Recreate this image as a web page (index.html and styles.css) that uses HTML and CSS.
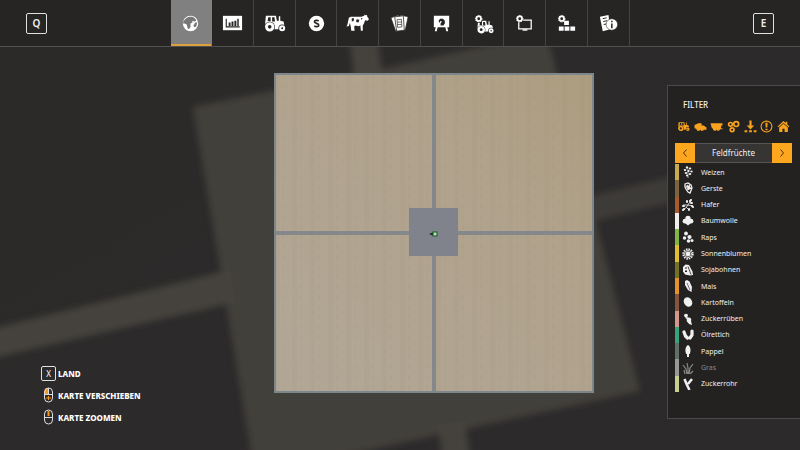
FILE: index.html
```html
<!DOCTYPE html>
<html lang="de">
<head>
    <meta charset="UTF-8">
    <meta name="viewport" content="width=device-width, initial-scale=1.0">
    <title>Karte</title>
    <link rel="stylesheet" href="styles.css">
</head>
<body>
    <svg class="backdrop" viewBox="0 0 800 450" preserveAspectRatio="xMidYMid slice" aria-hidden="true">
        <defs>
            <linearGradient id="ground" x1="0" y1="0" x2="1" y2="1">
                <stop offset="0" stop-color="#2b2a29"/>
                <stop offset="1" stop-color="#2d2a2b"/>
            </linearGradient>
            <filter id="soft" x="-10%" y="-10%" width="120%" height="120%"><feGaussianBlur stdDeviation="3"/></filter>
        </defs>
        <rect width="800" height="450" fill="url(#ground)"/>
        <g filter="url(#soft)" fill="#45433d">
            <path fill="#42403a" d="M193 107 L378 70 546 32 640 391 470 428 255 475Z"/>
            <path d="M348 20h27l8 60-28 6Z"/>
            <path d="M-20 332 L230 270 236 302 -20 361Z"/>
            <path fill="#3d3b37" d="M590 196 L820 142 820 166 594 221Z"/>
            <path d="M438 425 L465 420 472 470 444 470Z"/>
        </g>
    </svg>

    <header class="topbar">
        <button class="key" type="button">Q</button>
        <nav class="tabs">
            <button class="tab active" type="button" aria-label="Karte">
                <svg viewBox="0 0 24 24"><circle cx="12" cy="12" r="8" fill="#fff"/><path fill="#777" d="M5 9l3-3 3-1 3 0 3 2 1 2-2 1-2-1 0 2-2 1 0 4-2 2-1-1-1-4-2-1-2 0zM17 11l2 0-1 4-2 1-1-2z"/></svg>
            </button>
            <button class="tab" type="button" aria-label="Preise">
                <svg viewBox="0 0 24 24"><path fill="#fff" d="M2 4h20v15H2z"/><path fill="none" stroke="#272625" stroke-width="1.200" d="M5.500 7v8.500h14"/><path fill="#272625" d="M8 11h2v3.500H8zM11 10h2v4.500h-2zM14 9h2v5.500h-2zM17 7h1.500v7.500H17z"/></svg>
            </button>
            <button class="tab" type="button" aria-label="Fahrzeuge">
                <svg viewBox="0 0 24 24"><use href="#tractor"/></svg>
            </button>
            <button class="tab" type="button" aria-label="Finanzen">
                <svg viewBox="0 0 24 24"><circle cx="12" cy="12" r="8" fill="#fff"/><path fill="none" stroke="#272625" stroke-width="1.700" d="M14.300 9.300c-1.500-1-4.500-.8-4.500.9 0 2 4.600 1.300 4.600 3.500 0 1.800-3.100 2-4.800.8"/></svg>
            </button>
            <button class="tab" type="button" aria-label="Tiere">
                <svg viewBox="0 0 24 24"><path fill="#fff" d="M3 6L5 5l11 0 3-1 .5-1.500 1 1 1.500-.5 0 1.500 2 3-1.500 1.500-2.500-.5-1.500 4-1 1.500v5.500h-2l-.5-5.500-2 .8-3-.8-1.500 1 .5 4.500H5.500l-.5-4.500-1-3.500-1 3L.5 15l1-2z"/><path fill="#272625" d="M6 6.500l2.500 0-.5 3-2 .5zM11 7.500l3 .5-1 3-2.500-.5zM15.500 6l1.500.5-.5 2z"/></svg>
            </button>
            <button class="tab" type="button" aria-label="Verträge">
                <svg viewBox="0 0 24 24"><path fill="#fff" stroke="#272625" stroke-width=".8" d="M3 6l8-3 4 14-7 3z"/><path fill="#fff" stroke="#272625" stroke-width=".8" d="M13 3l8 2-3 14-8-2z"/><path fill="#fff" stroke="#272625" stroke-width=".8" d="M7 5l9-1 1 15-8 1z"/><path fill="none" stroke="#272625" stroke-width=".7" d="M9.500 8l4.500-.4.500 8-4.500.4zM10 10.500h4M10 13h4"/></svg>
            </button>
            <button class="tab" type="button" aria-label="Produktion">
                <svg viewBox="0 0 24 24"><path fill="#fff" d="M4 4h16v12h-2l1 4h-2l-1-4H8l-1 4H5l1-4H4z"/><path fill="#272625" d="M9 9l1.500-2 3 0L15.500 9l0 3-1.500 2h-3v-2l1.500-2-1.500-.5-1.500 2z"/></svg>
            </button>
            <button class="tab" type="button" aria-label="Fahrzeugeinstellungen">
                <svg viewBox="0 0 24 24"><g transform="translate(4 6) scale(.8)"><use href="#tractor" width="24" height="24"/></g><circle class="hole" cx="7" cy="7" r="4.500"/><use href="#cog" width="24" height="24"/></svg>
            </button>
            <button class="tab" type="button" aria-label="Anzeige">
                <svg viewBox="0 0 24 24"><path fill="none" stroke="#fff" stroke-width="1.300" d="M6 8.500h13v9H6z"/><path fill="#fff" d="M10 18h5v1.500h-5z"/><circle cx="7" cy="7" r="4" fill="#272625"/><use href="#cog"/></svg>
            </button>
            <button class="tab" type="button" aria-label="Spieleinstellungen">
                <svg viewBox="0 0 24 24"><path fill="#fff" d="M9.500 9h5v4.500h-5zM4 15h5v4.500H4zM10 15h5v4.500h-5zM16 15h5v4.500h-5z"/><use href="#cog"/></svg>
            </button>
            <button class="tab" type="button" aria-label="Hilfe">
                <svg viewBox="0 0 24 24"><path fill="#fff" d="M3 5l9-2 2 15-8 2z"/><path fill="none" stroke="#272625" d="M6 7l4-1M6.500 10l4-1M7 13l3-.5"/><circle cx="15.500" cy="13" r="6" fill="#fff" stroke="#272625" stroke-width=".6"/><path stroke="#272625" stroke-width="1.600" d="M15.500 9v1.600M15.500 12v5"/></svg>
            </button>
        </nav>
        <button class="key" type="button">E</button>
    </header>

    <main class="screen">
        <ul class="hints">
            <li><span class="key small">X</span>LAND</li>
            <li>
                <svg viewBox="0 0 15 16"><path fill="#f39a1e" d="M7 1C4 1 3.500 3 3.500 5v2H7z"/><rect x="3.500" y="1" width="8" height="14" rx="4" fill="none" stroke="#ddd"/><path fill="none" stroke="#ddd" d="M3.500 7.500h8M7.500 1v6"/><path fill="none" stroke="#f39a1e" d="M5 11h5M7.500 9v4"/></svg>
                KARTE VERSCHIEBEN
            </li>
            <li>
                <svg viewBox="0 0 15 16"><rect x="3.500" y="1" width="8" height="14" rx="4" fill="none" stroke="#ddd"/><path fill="none" stroke="#ddd" d="M3.500 8.500h8"/><path fill="none" stroke="#f39a1e" stroke-width="2" d="M7.500 2v5"/></svg>
                KARTE ZOOMEN
            </li>
        </ul>

        <svg class="map" viewBox="0 0 320 320" role="img" aria-label="Karte">
            <defs>
                <linearGradient id="field" x1="0" y1="1" x2="1" y2="0">
                    <stop offset="0" stop-color="#b2a797"/>
                    <stop offset=".7" stop-color="#b0a28b"/>
                    <stop offset="1" stop-color="#ac9d80"/>
                </linearGradient>
                <pattern id="rows" width="18" height="10" patternUnits="userSpaceOnUse">
                    <path fill="#8d805f" opacity=".07" d="M0 0h5v10H0z"/>
                    <path fill="#8d805f" opacity=".08" d="M8 2h2v4H8z"/>
                </pattern>
            </defs>
            <rect width="320" height="320" fill="#7d868a"/>
            <rect x="2" y="2" width="316" height="316" fill="url(#field)"/>
            <rect x="2" y="2" width="316" height="316" fill="url(#rows)"/>
            <path fill="#85888a" d="M158 2h4v316h-4zM2 158h316v4H2z"/>
            <rect x="135" y="135" width="49" height="48" fill="#80838b"/>
            <path fill="#16241a" d="M155 161l5-2v4z"/>
            <rect x="159" y="159" width="4" height="4" fill="#a9e0ae" stroke="#1d5a2a"/>
        </svg>

        <aside class="panel">
            <h2>FILTER</h2>
            <div class="categories">
                <button type="button" aria-label="Traktoren"><svg viewBox="0 0 24 24"><use href="#tractor"/></svg></button>
                <button type="button" aria-label="Erntemaschinen"><svg viewBox="0 0 24 24"><path d="M1 9l7-3h6v4h4l5 4v4h-5l-1 2h-4l-1-2-2 2H6l-2-4-3-1z"/></svg></button>
                <button type="button" aria-label="Anhänger"><svg viewBox="0 0 24 24"><path d="M1 6h22v4h-2l-1 5h3v2H6l-3-3z"/><circle cx="9" cy="17" r="3"/><circle cx="15" cy="17" r="3"/></svg></button>
                <button type="button" aria-label="Geräte"><svg viewBox="0 0 24 24"><g fill="none" stroke="currentColor" stroke-width="3"><circle cx="6.500" cy="8" r="3.500"/><circle cx="17" cy="7.500" r="4.500"/><circle cx="9.500" cy="18" r="3.500"/></g></svg></button>
                <button type="button" aria-label="Abladestellen"><svg viewBox="0 0 24 24"><path d="M10 1h4v9h5L12 17.500 5 10h5zM1 19h5v3.500H1zM9.500 19h5v3.500h-5zM18 19h5v3.500h-5z"/></svg></button>
                <button type="button" aria-label="Hinweise"><svg viewBox="0 0 24 24"><circle cx="12" cy="12" r="10" fill="none" stroke="currentColor" stroke-width="2"/><path d="M10 5h4l-.5 9h-3zM10 16h4v3h-4z"/></svg></button>
                <button type="button" aria-label="Gebäude"><svg viewBox="0 0 24 24"><path d="M12 2l4 3.600V3h3v5.400L23 12l-1.500 1.500L12 5.500l-9.500 8L1 12zM4 14l8-7 8 7v8h-6v-6h-4v6H4z"/></svg></button>
            </div>

            <div class="picker">
                <button type="button" aria-label="Zurück"><svg viewBox="0 0 10 10"><path d="M6.500 1.500L3.500 5l3 3.500"/></svg></button>
                <span>Feldfrüchte</span>
                <button type="button" aria-label="Weiter"><svg viewBox="0 0 10 10"><path d="M3.500 1.500L6.500 5l-3 3.500"/></svg></button>
            </div>

            <ul class="crops">
                <li class="weizen"><svg viewBox="0 0 12 12"><path d="M6 12V3" fill="none" stroke="currentColor" stroke-width=".6"/><ellipse cx="5" cy="1.500" rx="1.200" ry="1.300"/><ellipse cx="8" cy="2.500" rx="1.300" ry="1.100"/><ellipse cx="3" cy="4" rx="1.300" ry="1.100"/><ellipse cx="6.500" cy="5" rx="1.200" ry="1.100"/><ellipse cx="9.500" cy="5.500" rx="1.200" ry="1.100"/><ellipse cx="4" cy="7" rx="1.300" ry="1.100"/><ellipse cx="8" cy="8" rx="1.300" ry="1.100"/><ellipse cx="5" cy="9.500" rx="1.100" ry="1"/></svg>Weizen</li>
                <li class="gerste"><svg viewBox="0 0 12 12"><path fill="none" stroke="currentColor" stroke-width="1.300" d="M3 2l3-1 3 2 1 3-2 5-2-1-2-3-1-2zM5 3l2 5M7 3l1 4M4 5l4-1M5 7l4-1"/></svg>Gerste</li>
                <li class="hafer"><svg viewBox="0 0 12 12"><path fill="none" stroke="currentColor" stroke-width=".8" d="M2 11l4-5 3-5M6 6H1M6 6l5 1M4 8l3 3"/><path fill="none" stroke="currentColor" stroke-width="2" stroke-linecap="round" d="M5 2l0 1M9 1l-1 1M10 4l-1 0M1 7h1M10 7l1 1M7 10l0 1M1 11l1-1"/></svg>Hafer</li>
                <li class="baumwolle"><svg viewBox="0 0 12 12"><circle cx="6" cy="3.500" r="2.700"/><circle cx="3" cy="6.200" r="2.400"/><circle cx="9" cy="6.200" r="2.400"/><path d="M3 5h6v3l-3 2.500L3 8z"/></svg>Baumwolle</li>
                <li class="raps"><svg viewBox="0 0 12 12"><circle cx="4" cy="2.500" r="1.900"/><circle cx="2.500" cy="7" r="1.700"/><circle cx="7.500" cy="6" r="2.100"/><circle cx="6.500" cy="10" r="1.800"/><circle cx="10" cy="9.500" r="1.500"/></svg>Raps</li>
                <li class="sonnenblumen"><svg viewBox="0 0 12 12"><circle cx="6" cy="6" r="2.400"/><circle cx="6" cy="6" r="3.500" fill="none" stroke="currentColor" stroke-width=".9"/><circle cx="6" cy="6" r="4.800" fill="none" stroke="currentColor" stroke-width="1.800" stroke-dasharray="1.500 1"/></svg>Sonnenblumen</li>
                <li class="sojabohnen"><svg viewBox="0 0 12 12"><path d="M1 3l2.500-2.500L7 1l3.500 6.500L11 11l-3 .5-5-1-2-3z"/><path fill="none" stroke="#232120" stroke-width=".8" d="M6 2.500l3 8"/><path fill="#232120" d="M3.500 3h1v2h-1zM3 6.500h2v1.500H3z"/></svg>Sojabohnen</li>
                <li class="mais"><svg viewBox="0 0 12 12"><path d="M3 1l2-1 2.500 1.500L10 7l-.5 5-3.500-2-3-5z"/><path fill="none" stroke="#232120" stroke-width=".6" d="M5 3l3 7"/></svg>Mais</li>
                <li class="kartoffeln"><svg viewBox="0 0 12 12"><ellipse cx="6" cy="6" rx="4" ry="5" transform="rotate(-30 6 6)"/></svg>Kartoffeln</li>
                <li class="zuckerrueben"><svg viewBox="0 0 12 12"><ellipse cx="4" cy="2.500" rx="2" ry="1.800"/><ellipse cx="7" cy="7" rx="2.300" ry="2.600"/><path d="M5 8l4 0 1 4-3-1z"/><path d="M3 3l1 3 3-1z"/></svg>Zuckerrüben</li>
                <li class="oelrettich"><svg viewBox="0 0 12 12"><path fill="none" stroke="currentColor" stroke-width="3.200" stroke-linecap="round" d="M2 3l1.500 4L5.500 9M10 2l0 4-2 3"/></svg>Ölrettich</li>
                <li class="pappel"><svg viewBox="0 0 12 12"><path d="M6 0c3 2 3 6 1.800 9H7v3H5V9h-.8C3 6 3 2 6 0z"/></svg>Pappel</li>
                <li class="gras off"><svg viewBox="0 0 12 12"><path fill="none" stroke="currentColor" stroke-width="1.200" d="M5 12L4 7 1 3M6 12V6L5 1M7 12l1-6 3-4M3 12L2 8M8 12l3-3"/></svg>Gras</li>
                <li class="zuckerrohr"><svg viewBox="0 0 12 12"><path fill="none" stroke="currentColor" stroke-width="2.500" d="M2.500 1l2 5 3 6M10 1L6 6"/></svg>Zuckerrohr</li>
            </ul>
        </aside>
    </main>

    <!-- shared icons -->
    <svg class="sprite" aria-hidden="true">
        <symbol id="tractor" viewBox="0 0 24 24">
            <path fill="currentColor" d="M3 4h10.500l1 5h2V4.500H18V9l3.500 1 1 5-3 3h-8L8 13l-6 1z"/>
            <path class="hole" d="M5.500 5.500h2.500V9.500H4.800zM9.500 5.500H12l.5 4.500h-3z"/>
            <circle class="hole" cx="7" cy="15.500" r="5.500"/>
            <circle class="hole" cx="20" cy="17" r="3.900"/>
            <circle cx="7" cy="15.500" r="3.400" fill="none" stroke="currentColor" stroke-width="3"/>
            <circle cx="20" cy="17" r="2.100" fill="none" stroke="currentColor" stroke-width="2.200"/>
        </symbol>
        <symbol id="cog" viewBox="0 0 24 24">
            <circle cx="7" cy="7" r="2.400" fill="none" stroke="currentColor" stroke-width="1.800"/>
            <circle cx="7" cy="7" r="3.400" fill="none" stroke="currentColor" stroke-width="1" stroke-dasharray="1.500 1"/>
        </symbol>
    </svg>
</body>
</html>
```
FILE: styles.css
```css
* {
    box-sizing: border-box;
}
body {
    margin: 0;
    min-height: 100vh;
    display: flex;
    flex-direction: column;
    background: #2c2a2a;
    color: #f0f0f0;
    font-family: "Noto Sans", sans-serif;
    font-size: 7px;
}
button {
    padding: 0;
    border: none;
    background: none;
    color: inherit;
    font: inherit;
    cursor: pointer;
}
ul {
    list-style: none;
    margin: 0;
    padding: 0;
}
svg {
    display: block;
    fill: currentColor;
}
.backdrop {
    position: absolute;
    inset: 0;
    width: 100%;
    height: 100%;
    z-index: -1;
}
.sprite {
    position: absolute;
    width: 0;
    height: 0;
}
.hole {
    fill: #252423;
}

/* top bar */
.topbar {
    display: flex;
    justify-content: space-between;
    align-items: center;
    height: 47px;
    padding: 0 26px;
    background: #262524;
    border-bottom: 1px solid #51504f;
}
.key {
    display: flex;
    align-items: center;
    justify-content: center;
    width: 21px;
    height: 21px;
    border: 1px solid #e0e0e0;
    border-radius: 2px;
    font-size: 10px;
    font-weight: 600;
}
.key.small {
    width: 15px;
    height: 15px;
    font-size: 8px;
    font-weight: 400;
}
.tabs {
    display: flex;
    align-self: stretch;
    width: 459px;
}
.tab {
    flex: 1;
    display: flex;
    align-items: center;
    justify-content: center;
    border-right: 1px solid #454443;
    color: #fff;
}
.tab svg {
    width: 23px;
    height: 23px;
}
.tab.active {
    background: #808080;
    border-right-color: #808080;
    box-shadow: inset 0 -2px #dca13d;
}

/* map screen */
.screen {
    flex: 1;
    display: grid;
    grid-template-columns: 4fr 320px 3fr;
    align-items: start;
}
.map {
    width: 100%;
    margin-top: 26px;
}
.hints {
    align-self: end;
    padding: 0 0 22px 41px;
    color: #fff;
    font-size: 8px;
    font-weight: 800;
}
.hints li {
    display: flex;
    align-items: center;
    gap: 2px;
    height: 22px;
}
.hints svg {
    width: 15px;
    height: 16px;
}

/* filter panel */
.panel {
    justify-self: end;
    width: 133px;
    margin-top: 38px;
    padding: 12px 8px 26px 7px;
    background: #242221;
    border: 1px solid #4b4a4a;
    border-right: none;
}
.panel h2 {
    margin: 0 0 8px 8px;
    font-size: 8px;
    font-weight: 500;
    line-height: 14px;
}
.categories {
    display: flex;
    height: 13px;
    margin-bottom: 10px;
    color: #f9a21f;
}
.categories button {
    flex: 1;
    display: flex;
    align-items: center;
    justify-content: center;
}
.categories svg {
    width: 13px;
    height: 13px;
}
.picker {
    display: flex;
    height: 20px;
    margin-bottom: 1px;
}
.picker span {
    flex: 1;
    background: #363534;
    border: solid #565554;
    border-width: 1px 0;
    font-size: 8px;
    line-height: 18px;
    text-align: center;
}
.picker button {
    display: flex;
    align-items: center;
    justify-content: center;
    width: 20px;
    background: #ffa61f;
}
.picker svg {
    width: 10px;
    height: 10px;
    fill: none;
    stroke: #4a3410;
}
.crops {
    display: grid;
    grid-auto-rows: 1fr;
    height: 228px;
}
.crops li {
    display: flex;
    align-items: center;
    gap: 7px;
    padding-left: 3px;
    border-left: 4px solid;
}
.crops svg {
    width: 12px;
    height: 12px;
}
.crops .off {
    color: #8a8988;
}
.crops .weizen { border-left-color: #c8a94e; }
.crops .gerste { border-left-color: #7e6340; }
.crops .hafer { border-left-color: #a85a2a; }
.crops .baumwolle { border-left-color: #eeeeee; }
.crops .raps { border-left-color: #83b545; }
.crops .sonnenblumen { border-left-color: #e2be2e; }
.crops .sojabohnen { border-left-color: #737126; }
.crops .mais { border-left-color: #e5922c; }
.crops .kartoffeln { border-left-color: #85543f; }
.crops .zuckerrueben { border-left-color: #d2968a; }
.crops .oelrettich { border-left-color: #35a37c; }
.crops .pappel { border-left-color: #626e6a; }
.crops .gras { border-left-color: #98989a; }
.crops .zuckerrohr { border-left-color: #c6d08c; }
```
